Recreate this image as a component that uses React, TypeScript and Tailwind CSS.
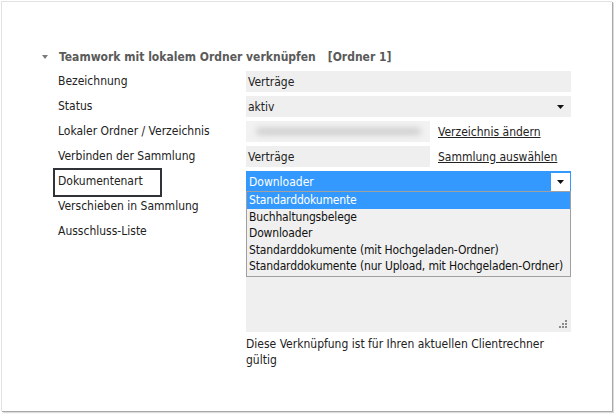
import React from 'react';

const FONT = "font-['DejaVu_Sans_Condensed','DejaVu_Sans',sans-serif] [font-stretch:condensed]";

const OPTIONS = [
  'Standarddokumente',
  'Buchhaltungsbelege',
  'Downloader',
  'Standarddokumente (mit Hochgeladen-Ordner)',
  'Standarddokumente (nur Upload, mit Hochgeladen-Ordner)',
];

function Arrow() {
  return (
    <svg width="7" height="4" viewBox="0 0 7 4" aria-hidden="true">
      <path d="M0 0h7L3.5 4z" fill="#111" />
    </svg>
  );
}

function Row({ label, children, boxed }: { label: string; children?: React.ReactNode; boxed?: boolean }) {
  return (
    <div className="mb-[4px] flex h-[21px] items-center">
      <div className="relative w-[188px] leading-[21px]">
        {label}
        {boxed && (
          <div className="absolute left-[-5px] top-[-3px] h-[29px] w-[109px] border-2 border-[#2f3338]" />
        )}
      </div>
      {children}
    </div>
  );
}

export default function App() {
  return (
    <div className={`h-[414px] w-[614px] bg-white pl-px pt-px text-[12px] text-[#222] ${FONT}`}>
      <div className="h-[410px] w-[611px] border-l border-t border-[#e2e2e2] pl-[56px] pt-[45px] shadow-[1px_1px_0_#a8a8a8,2px_2px_1px_#dcdcdc]">
        <div className="-ml-[16px] flex h-[20px] items-center font-bold text-[#5a5a5a]">
          <svg width="6" height="4" viewBox="0 0 6 4" className="mr-[11px]" aria-hidden="true">
            <path d="M0 0h6L3 4z" fill="#7a7a7a" />
          </svg>
          <span>Teamwork mit lokalem Ordner verknüpfen</span>
          <span className="ml-[12px]">[Ordner 1]</span>
        </div>
        <div className="mt-[4px]">
          <Row label="Bezeichnung">
            <div className="flex h-[21px] w-[325px] items-center bg-[#efefef] pl-[2px]">Verträge</div>
          </Row>
          <Row label="Status">
            <div className="flex h-[21px] w-[325px] items-center justify-between bg-[#efefef] pl-[2px] pr-[7px]">
              <span>aktiv</span>
              <Arrow />
            </div>
          </Row>
          <Row label="Lokaler Ordner / Verzeichnis">
            <div className="flex h-[21px] w-[184px] items-center overflow-hidden bg-[#f2f2f2]">
              <div className="ml-[10px] h-[7px] w-[165px] rounded bg-[#cdcdcd] blur-[3px]" />
            </div>
            <span className="ml-[8px] underline">Verzeichnis ändern</span>
          </Row>
          <Row label="Verbinden der Sammlung">
            <div className="flex h-[21px] w-[184px] items-center bg-[#efefef] pl-[2px]">Verträge</div>
            <span className="ml-[8px] underline">Sammlung auswählen</span>
          </Row>
          <Row label="Dokumentenart" boxed>
            <div className="relative h-[21px] w-[325px]">
              <div className="flex h-[21px] items-center justify-between border border-[#3399ff] bg-[#3399ff] pl-[2px] text-white">
                <span>Downloader</span>
                <div className="flex h-[18px] w-[19px] items-center justify-center bg-white">
                  <Arrow />
                </div>
              </div>
              <div className="absolute left-0 top-[20px] z-10 w-[325px] border border-[#a0a0a0] bg-[#f0f0f0] pb-[1px]">
                {OPTIONS.map((o, i) => (
                  <div
                    key={o}
                    className={`h-[16.5px] whitespace-nowrap pl-[2px] leading-[16.5px] tracking-[-0.15px] ${i === 0 ? 'bg-[#3399ff] text-white' : 'text-[#111]'}`}
                  >
                    {o}
                  </div>
                ))}
              </div>
            </div>
          </Row>
          <Row label="Verschieben in Sammlung">
            <div className="h-[21px] w-[325px] bg-[#efefef]" />
          </Row>
          <div className="flex">
            <div className="w-[188px] leading-[21px]">Ausschluss-Liste</div>
            <div className="w-[325px]">
              <div className="flex h-[111px] items-end justify-end bg-[#efefef] p-[4px]">
                <svg width="8" height="8" viewBox="0 0 8 8" aria-hidden="true">
                  <g fill="#8a8a8a">
                    <rect x="6" y="0" width="2" height="2" />
                    <rect x="3" y="3" width="2" height="2" />
                    <rect x="6" y="3" width="2" height="2" />
                    <rect x="0" y="6" width="2" height="2" />
                    <rect x="3" y="6" width="2" height="2" />
                    <rect x="6" y="6" width="2" height="2" />
                  </g>
                </svg>
              </div>
              <p className="mt-[4px] leading-[16px]">Diese Verknüpfung ist für Ihren aktuellen Clientrechner gültig</p>
            </div>
          </div>
        </div>
      </div>
    </div>
  );
}
